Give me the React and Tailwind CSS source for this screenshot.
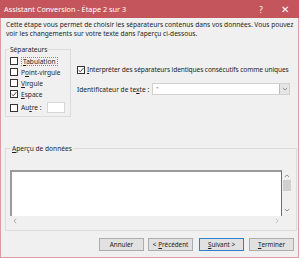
import React from 'react';

const Check = ({ checked }) => (
    <span className="w-[8px] h-[8px] border border-[#333] bg-white flex items-center justify-center shrink-0">
        {checked && (
            <svg width="6" height="6" viewBox="0 0 6 6">
                <path d="M0.6 3.2 L2.3 4.8 L5.4 1.1" fill="none" stroke="#333" strokeWidth="0.9" />
            </svg>
        )}
    </span>
);

const Btn = ({ children, primary }) => (
    <button
        className={`w-[45px] h-[13px] flex items-center justify-center whitespace-nowrap bg-[#e1e1e1] text-[#222] ${primary ? 'border border-[#2d7fd2]' : 'border border-[#adadad]'}`}>
        {children}
    </button>
);

export default function App() {
    const seps = [
        { label: <><span className="underline">T</span>abulation</>, focus: true },
        { label: <>P<span className="underline">o</span>int-virgule</> },
        { label: <><span className="underline">V</span>irgule</> },
        { label: <><span className="underline">E</span>space</>, checked: true },
    ];

    return (
        <div className="w-[300px] h-[258px] bg-white">
            <div className="w-[299px] h-[258px] flex flex-col bg-[#f0f0f0] border border-t-0 border-[#dd9aa0] text-[#1e1e1e] text-[6.6px] leading-[9px]"
                style={{ fontFamily: '"Noto Sans", "Open Sans", sans-serif' }}>
                {/* title bar */}
                <div className="h-[18px] bg-[#c5555c] flex items-center pl-[4px] text-white text-[7.3px] -mx-px whitespace-nowrap">
                    <span className="flex-1">Assistant Conversion - Étape 2 sur 3</span>
                    <span className="w-[20px] text-center text-[8px]">?</span>
                    <span className="w-[28px] text-center text-[10px] leading-[10px]">✕</span>
                </div>

                <div className="px-[4px] pt-[2px] flex-1 flex flex-col">
                    <p className="pl-px leading-[9px]">
                        Cette étape vous permet de choisir les séparateurs contenus dans vos données. Vous pouvez voir les changements sur votre texte dans l'aperçu ci-dessous.
                    </p>

                    <div className="flex mt-[7px] whitespace-nowrap">
                        <fieldset className="w-[66px] h-[72px] border border-[#dcdcdc] px-[4px]">
                            <legend className="px-px ml-[-1px] leading-[9px]">Séparateurs</legend>
                            <div className="flex flex-col gap-[3px] mt-[3px]">
                                {seps.map((s, i) => (
                                    <div key={i} className="flex items-center gap-[3px] h-[8px]">
                                        <Check checked={s.checked} />
                                        <span className={s.focus ? 'border border-dotted border-[#888] px-px leading-[7px]' : ''}>{s.label}</span>
                                    </div>
                                ))}
                                <div className="flex items-center gap-[3px] h-[11px] mt-[1px]">
                                    <Check />
                                    <span>Au<span className="underline">t</span>re :</span>
                                    <span className="ml-[3px] w-[18px] h-[11px] bg-white border border-[#d6d6d6]" />
                                </div>
                            </div>
                        </fieldset>

                        <div className="flex-1 pl-[6px] pt-[20px]">
                            <div className="flex items-center gap-[2px]">
                                <Check checked />
                                <span className="tracking-[-0.1px]"><span className="underline">I</span>nterpréter des séparateurs identiques consécutifs comme uniques</span>
                            </div>
                            <div className="flex items-center mt-[9px]">
                                <span className="w-[75px]">Identificateur de te<span className="underline">x</span>te :</span>
                                <div className="w-[138px] h-[12px] bg-white border border-[#d0d0d0] flex items-center">
                                    <span className="flex-1 pl-[3px] text-[6px] leading-[6px] text-[#666]">"</span>
                                    <span className="w-[10px] h-[10px] bg-[#e5e5e5] border-l border-[#bdbdbd] flex items-center justify-center">
                                        <svg width="6" height="4" viewBox="0 0 6 4"><path d="M0.8 1 L3 3 L5.2 1" fill="none" stroke="#777" strokeWidth="0.8" /></svg>
                                    </span>
                                </div>
                            </div>
                        </div>
                    </div>

                    <fieldset className="mt-[27px] w-[291px] h-[87px] border border-[#dcdcdc] px-[4px]">
                        <legend className="px-px ml-[1px] leading-[9px]"><span className="underline">A</span>perçu de données</legend>
                        <div className="mt-[17px] flex flex-col">
                            <div className="flex">
                                <div className="w-[272px] h-[46px] bg-white border-l-2 border-t-2 border-r border-[#9a9a9a] border-r-[#6f6f6f]" />
                                <div className="w-[10px] h-[46px] flex flex-col items-center">
                                    <svg width="6" height="4" viewBox="0 0 6 4" className="mt-[4px]"><path d="M0.8 3 L3 1 L5.2 3" fill="none" stroke="#777" strokeWidth="0.8" /></svg>
                                    <span className="w-[8px] h-[11px] bg-[#d0d0d0] mt-[2px]" />
                                    <span className="flex-1" />
                                    <svg width="6" height="4" viewBox="0 0 6 4" className="mb-[4px]"><path d="M0.8 1 L3 3 L5.2 1" fill="none" stroke="#777" strokeWidth="0.8" /></svg>
                                </div>
                            </div>
                            <div className="w-[272px] h-[9px] flex items-center justify-between px-[3px]">
                                <svg width="4" height="6" viewBox="0 0 4 6"><path d="M3 0.8 L1 3 L3 5.2" fill="none" stroke="#999" strokeWidth="0.8" /></svg>
                                <svg width="4" height="6" viewBox="0 0 4 6"><path d="M1 0.8 L3 3 L1 5.2" fill="none" stroke="#bbb" strokeWidth="0.8" /></svg>
                            </div>
                        </div>
                    </fieldset>

                    <div className="flex mt-[7px] pl-[94px] text-[6.3px]">
                        <Btn>Annuler</Btn>
                        <span className="w-[4px]" />
                        <Btn>&lt; <span className="underline ml-[2px]">P</span>récédent</Btn>
                        <span className="w-[6px]" />
                        <Btn primary><span className="underline">S</span>uivant &gt;</Btn>
                        <span className="w-[5px]" />
                        <Btn><span className="underline">T</span>erminer</Btn>
                    </div>
                </div>
            </div>
        </div>
    );
}
